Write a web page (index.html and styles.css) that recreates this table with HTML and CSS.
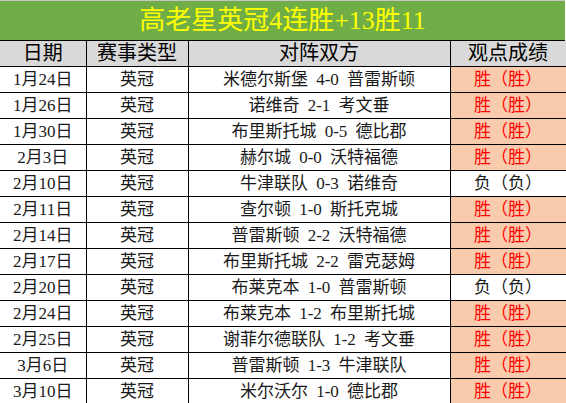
FILE: index.html
```html
<!DOCTYPE html>
<html lang="zh">
<head>
<meta charset="utf-8">
<link rel="stylesheet" href="styles.css">
</head>
<body>
<div class="sheet">
  <div class="title">高老星英冠4连胜+13胜11</div>
  <table class="grid">
    <colgroup>
      <col class="c1"><col class="c2"><col class="c3"><col class="c4">
    </colgroup>
    <thead>
      <tr><th>日期</th><th>赛事类型</th><th>对阵双方</th><th>观点成绩</th></tr>
    </thead>
    <tbody>
      <tr><td>1月24日</td><td>英冠</td><td class="match">米德尔斯堡 4-0 普雷斯顿</td><td class="win">胜（胜）</td></tr>
      <tr><td>1月26日</td><td>英冠</td><td class="match">诺维奇 2-1 考文垂</td><td class="win">胜（胜）</td></tr>
      <tr><td>1月30日</td><td>英冠</td><td class="match">布里斯托城 0-5 德比郡</td><td class="win">胜（胜）</td></tr>
      <tr><td>2月3日</td><td>英冠</td><td class="match">赫尔城 0-0 沃特福德</td><td class="win">胜（胜）</td></tr>
      <tr><td>2月10日</td><td>英冠</td><td class="match">牛津联队 0-3 诺维奇</td><td class="loss">负（负）</td></tr>
      <tr><td>2月11日</td><td>英冠</td><td class="match">查尔顿 1-0 斯托克城</td><td class="win">胜（胜）</td></tr>
      <tr><td>2月14日</td><td>英冠</td><td class="match">普雷斯顿 2-2 沃特福德</td><td class="win">胜（胜）</td></tr>
      <tr><td>2月17日</td><td>英冠</td><td class="match">布里斯托城 2-2 雷克瑟姆</td><td class="win">胜（胜）</td></tr>
      <tr><td>2月20日</td><td>英冠</td><td class="match">布莱克本 1-0 普雷斯顿</td><td class="loss">负（负）</td></tr>
      <tr><td>2月24日</td><td>英冠</td><td class="match">布莱克本 1-2 布里斯托城</td><td class="win">胜（胜）</td></tr>
      <tr><td>2月25日</td><td>英冠</td><td class="match">谢菲尔德联队 1-2 考文垂</td><td class="win">胜（胜）</td></tr>
      <tr><td>3月6日</td><td>英冠</td><td class="match">普雷斯顿 1-3 牛津联队</td><td class="win">胜（胜）</td></tr>
      <tr><td>3月10日</td><td>英冠</td><td class="match">米尔沃尔 1-0 德比郡</td><td class="win">胜（胜）</td></tr>
    </tbody>
  </table>
</div>
</body>
</html>
```
FILE: styles.css
```css
html, body {
  margin: 0;
  padding: 0;
  background: #ffffff;
}
body {
  font-family: "Liberation Serif", "Noto Sans CJK SC", serif;
  color: #000;
}
.sheet {
  width: 566px;
}
.title {
  box-sizing: border-box;
  width: 565px;
  height: 41px;
  border-top: 1px solid #c6c6c6;
  border-bottom: 1px solid #000;
  background: #70ad47;
  color: #ffff00;
  font-size: 26px;
  line-height: 40px;
  text-align: center;
}
.grid {
  border-collapse: collapse;
  table-layout: fixed;
  width: 566px;
}
.c1 { width: 86px; }
.c2 { width: 102px; }
.c3 { width: 262px; }
.c4 { width: 116px; }
.grid th,
.grid td {
  border: 1px solid #000;
  padding: 0;
  text-align: center;
  white-space: nowrap;
  overflow: hidden;
}
.grid tr > :first-child {
  border-left: none;
}
.grid th {
  background: #d9d9d9;
  font-weight: normal;
  font-size: 20px;
  height: 25px;
  line-height: 25px;
}
.grid thead tr > th {
  border-top: none;
}
.grid td {
  font-size: 17px;
  height: 25px;
  line-height: 25px;
  color: #1a1a1a;
}
.grid td.match {
  word-spacing: 4px;
}
.grid td.win {
  background: #f8cbad;
  color: #ff0000;
}
.grid td.loss {
  color: #1a1a1a;
}
```
